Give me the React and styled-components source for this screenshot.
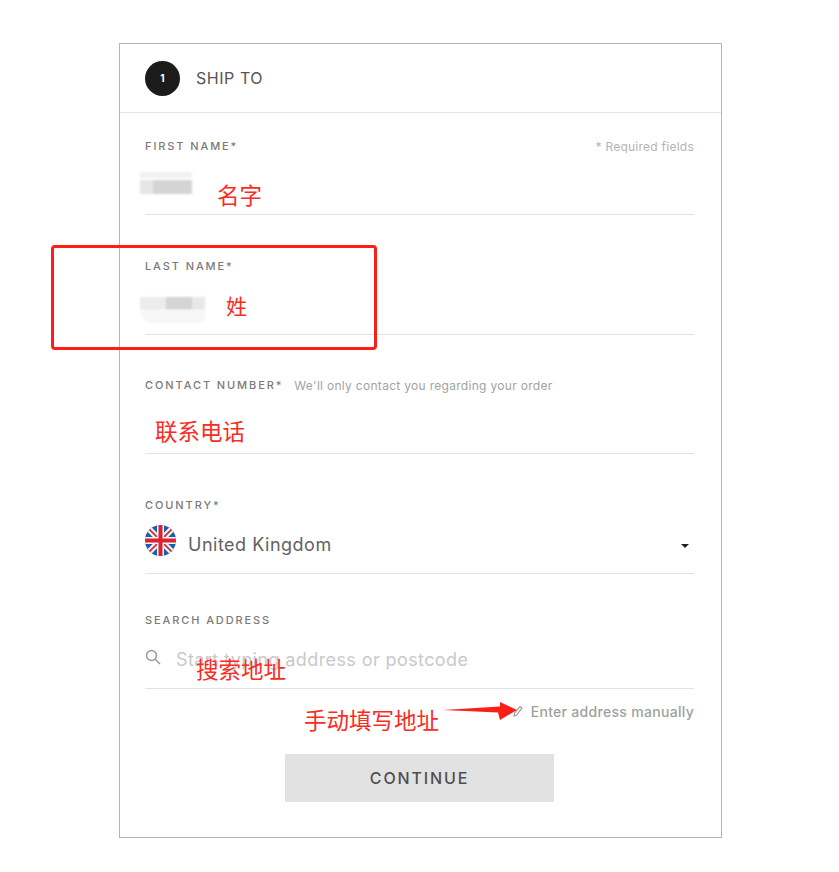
import styled, { createGlobalStyle } from "styled-components";

const GlobalStyle = createGlobalStyle`
  html, body {
    margin: 0;
    background: #fff;
    font-family: "Inter", "Liberation Sans", sans-serif;
  }
`;

const Page = styled.div`
  position: relative;
  width: 839px;
  height: 872px;
  padding: 43px 0 0 119px;
  box-sizing: border-box;
  overflow: hidden;
`;

const Card = styled.div`
  width: 603px;
  height: 795px;
  box-sizing: border-box;
  border: 1px solid #b4b4b4;
  display: flex;
  flex-direction: column;
`;

const Header = styled.div`
  display: flex;
  align-items: center;
  gap: 16px;
  height: 68px;
  padding: 0 25px;
  border-bottom: 1px solid #e4e4e4;
  flex-shrink: 0;
`;

const StepBadge = styled.div`
  width: 35px;
  height: 35px;
  border-radius: 50%;
  background: #1b1b1b;
  color: #fff;
  display: flex;
  align-items: center;
  justify-content: center;
  font-size: 10px;
  font-weight: 700;
`;

const HeaderTitle = styled.div`
  font-size: 16px;
  color: #555;
  letter-spacing: 0.55px;
`;

const Form = styled.div`
  display: flex;
  flex-direction: column;
  padding: 0 27px 0 25px;
`;

const Field = styled.div`
  height: 76px;
  box-sizing: border-box;
  border-bottom: 1px solid #e2e2e2;
  display: flex;
  flex-direction: column;
  margin-top: ${(p) => p.$gap}px;
`;

const LabelRow = styled.div`
  display: flex;
  align-items: center;
  justify-content: space-between;
  height: 14px;
`;

const LabelGroup = styled.div`
  display: flex;
  align-items: center;
  gap: 11px;
`;

const Label = styled.span`
  font-size: 11px;
  font-weight: 500;
  letter-spacing: 1.9px;
  color: #7a7a7a;
  white-space: nowrap;
`;

const Hint = styled.span`
  font-size: 12px;
  letter-spacing: ${(p) => p.$spacing}px;
  color: ${(p) => p.$color};
  white-space: nowrap;
`;

const ValueRow = styled.div`
  display: flex;
  align-items: center;
  flex: 1;
  padding-top: ${(p) => p.$top}px;
  gap: ${(p) => p.$gap}px;
`;

const FlagWrap = styled.div`
  display: flex;
  margin-bottom: 7px;
`;

const CountryName = styled.span`
  font-size: 18px;
  letter-spacing: 0.5px;
  color: #626262;
  flex: 1;
`;

const Caret = styled.span`
  width: 0;
  height: 0;
  margin: 4px 5px 0 0;
  border-left: 4px solid transparent;
  border-right: 4px solid transparent;
  border-top: 4px solid #222;
`;

const Placeholder = styled.span`
  font-size: 18px;
  letter-spacing: 0.4px;
  color: #c9c9c9;
  white-space: nowrap;
`;

const SearchGlyph = styled.svg`
  margin-bottom: 4px;
`;

const ManualRow = styled.div`
  display: flex;
  justify-content: flex-end;
  align-items: center;
  gap: 8px;
  height: 44px;
`;

const ManualText = styled.span`
  font-size: 14px;
  font-weight: 500;
  letter-spacing: 0.3px;
  color: #a0a0a0;
`;

const ContinueButton = styled.button`
  display: block;
  width: 269px;
  height: 48px;
  margin: 21px auto 0;
  padding: 0;
  border: none;
  background: #e2e2e2;
  color: #4f4f4f;
  font-family: inherit;
  font-size: 16px;
  font-weight: 500;
  letter-spacing: 1.85px;
`;

const BlurBlock = styled.div`
  position: absolute;
  left: ${(p) => p.$x}px;
  top: ${(p) => p.$y}px;
  width: ${(p) => p.$w}px;
  height: ${(p) => p.$h}px;
  background: ${(p) => p.$bg};
  border-radius: ${(p) => p.$radius || "0"};
  filter: blur(1px);
`;

const Note = styled.span`
  position: absolute;
  left: ${(p) => p.$x}px;
  top: ${(p) => p.$y}px;
  font-family: "Noto Sans CJK SC", sans-serif;
  font-size: ${(p) => p.$size}px;
  line-height: 1;
  color: #fb2a22;
  white-space: nowrap;
`;

const HighlightBox = styled.div`
  position: absolute;
  left: 51px;
  top: 245px;
  width: 326px;
  height: 105px;
  box-sizing: border-box;
  border: 3px solid #fb1f17;
  border-radius: 4px;
`;

const ArrowMark = styled.svg`
  position: absolute;
  left: 440px;
  top: 698px;
`;

const UkFlag = () => (
  <svg width="31" height="31" viewBox="0 0 31 31">
    <defs>
      <clipPath id="flagClip">
        <circle cx="15.5" cy="15.5" r="15.5" />
      </clipPath>
    </defs>
    <g clipPath="url(#flagClip)">
      <rect width="31" height="31" fill="#1c5fb0" />
      <path d="M0 0L31 31M31 0L0 31" stroke="#f4f4f4" strokeWidth="6" />
      <path d="M0 0L31 31M31 0L0 31" stroke="#d9232e" strokeWidth="1.6" />
      <path d="M15.5 0V31M0 15.5H31" stroke="#f4f4f4" strokeWidth="7" />
      <path d="M15.5 0V31M0 15.5H31" stroke="#d9232e" strokeWidth="4" />
    </g>
  </svg>
);

const SearchIcon = () => (
  <SearchGlyph width="16" height="16" viewBox="0 0 16 16" fill="none" stroke="#9a9a9a" strokeWidth="1.5">
    <circle cx="6.5" cy="6.5" r="5" />
    <path d="M10.2 10.2L15 15" />
  </SearchGlyph>
);

const PencilIcon = () => (
  <svg width="10" height="12" viewBox="0 0 10 12" fill="none" stroke="#9c9c9c" strokeWidth="1.2">
    <path d="M7 1.5L9 3L3.5 10L1 11L1.5 8.2Z" />
  </svg>
);

const App = () => {
  return (
    <Page>
      <GlobalStyle />
      <Card>
        <Header>
          <StepBadge>1</StepBadge>
          <HeaderTitle>SHIP TO</HeaderTitle>
        </Header>
        <Form>
          <Field $gap={26}>
            <LabelRow>
              <Label>FIRST NAME*</Label>
              <Hint $color="#b4b4b4" $spacing={0.25}>* Required fields</Hint>
            </LabelRow>
          </Field>
          <Field $gap={44}>
            <LabelRow>
              <Label>LAST NAME*</Label>
            </LabelRow>
          </Field>
          <Field $gap={43}>
            <LabelRow>
              <LabelGroup>
                <Label>CONTACT NUMBER*</Label>
                <Hint $color="#a3a3a3" $spacing={0.3}>We'll only contact you regarding your order</Hint>
              </LabelGroup>
            </LabelRow>
          </Field>
          <Field $gap={44}>
            <LabelRow>
              <Label>COUNTRY*</Label>
            </LabelRow>
            <ValueRow $gap={12} $top={3}>
              <FlagWrap>
                <UkFlag />
              </FlagWrap>
              <CountryName>United Kingdom</CountryName>
              <Caret />
            </ValueRow>
          </Field>
          <Field $gap={39}>
            <LabelRow>
              <Label>SEARCH ADDRESS</Label>
            </LabelRow>
            <ValueRow $gap={15} $top={3}>
              <SearchIcon />
              <Placeholder>Start typing address or postcode</Placeholder>
            </ValueRow>
          </Field>
          <ManualRow>
            <PencilIcon />
            <ManualText>Enter address manually</ManualText>
          </ManualRow>
          <ContinueButton>CONTINUE</ContinueButton>
        </Form>
      </Card>

      <BlurBlock $x={140} $y={172} $w={52} $h={6} $bg="#f1f1f1" />
      <BlurBlock $x={140} $y={180} $w={52} $h={14} $bg="linear-gradient(90deg, #e6e6e6 0 25%, #d4d4d4 25% 100%)" />
      <BlurBlock $x={140} $y={297} $w={65} $h={13} $bg="linear-gradient(90deg, #ececec 0 40%, #d4d4d4 40% 80%, #e8e8e8 80% 100%)" />
      <BlurBlock $x={141} $y={310} $w={64} $h={13} $bg="#f6f6f6" $radius="0 0 14px 30px" />

      <HighlightBox />
      <Note $x={217} $y={183} $size={22.5}>名字</Note>
      <Note $x={226} $y={295} $size={21}>姓</Note>
      <Note $x={155} $y={419} $size={22.5}>联系电话</Note>
      <Note $x={196} $y={657} $size={22.5}>搜索地址</Note>
      <Note $x={304} $y={708} $size={22.5}>手动填写地址</Note>
      <ArrowMark width="80" height="26" viewBox="0 0 80 26">
        <path d="M3 12L60 8.5L60 4L77 12L60 22L58 14.5Z" fill="#fb1f17" />
      </ArrowMark>
    </Page>
  );
};

export default App;
